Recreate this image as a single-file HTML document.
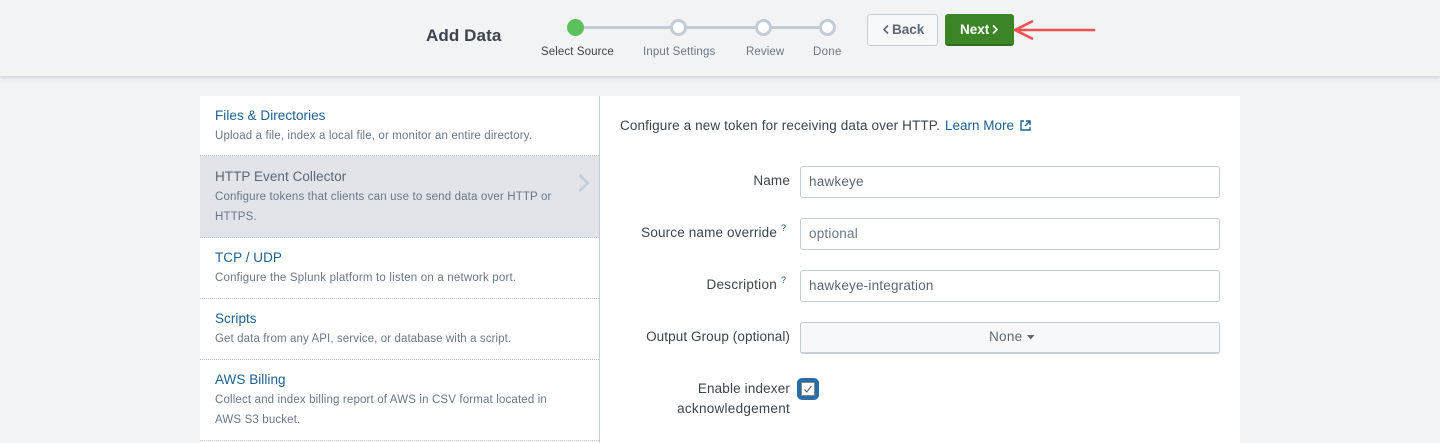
<!DOCTYPE html>
<html><head><meta charset="utf-8"><style>
html,body{margin:0;padding:0}
body{width:1440px;height:443px;background:#f2f3f5;position:relative;overflow:hidden;font-family:"Liberation Sans",sans-serif;font-size:13px;color:#3c444d}
.t{position:absolute;white-space:nowrap;line-height:20px}
.r{text-align:right}
.l{font-size:13.5px;letter-spacing:.15px}
.s{font-size:11.5px;letter-spacing:.15px;color:#6b7785}
.b{position:absolute;box-sizing:border-box}
.h{color:#1e6091;font-size:13.5px;letter-spacing:.05px}
.d{color:#6b7785;font-size:11.5px;letter-spacing:.15px}
.inp{position:absolute;left:800px;width:420px;height:32px;box-sizing:border-box;background:#fff;border:1px solid #c3cbd4;border-radius:3px;font-size:13.5px;letter-spacing:.2px;line-height:29px;padding-left:8px;color:#5c6773}
.dot{position:absolute;border-bottom:1px dotted #b5bdc6;left:200px;width:399px;height:0}
svg{position:absolute}
</style></head><body>
<div class="b" style="left:0;top:0;width:1440px;height:77px;background:#f2f3f5;border-bottom:1px solid #d5dae1;box-shadow:0 1px 3px rgba(170,180,195,.5)"></div>
<div class="t" style="left:426px;top:26px;font-size:17px;letter-spacing:.1px;font-weight:bold;color:#3c444d">Add Data</div>
<div class="b" style="left:575px;top:26px;width:252px;height:3px;background:#c3cbd4"></div>
<div class="b" style="left:567px;top:19px;width:17px;height:17px;border-radius:50%;background:#5cc05c"></div>
<div class="b" style="left:670px;top:19px;width:17px;height:17px;border-radius:50%;background:#fff;border:3px solid #c3cbd4"></div>
<div class="b" style="left:755px;top:19px;width:17px;height:17px;border-radius:50%;background:#fff;border:3px solid #c3cbd4"></div>
<div class="b" style="left:819px;top:19px;width:17px;height:17px;border-radius:50%;background:#fff;border:3px solid #c3cbd4"></div>
<div class="t s" style="left:541px;top:42px;color:#3c444d;letter-spacing:.1px">Select Source</div>
<div class="t s" style="left:643px;top:42px">Input Settings</div>
<div class="t s" style="left:746px;top:42px;letter-spacing:.1px">Review</div>
<div class="t s" style="left:813px;top:42px;letter-spacing:.3px">Done</div>

<div class="b" style="left:867px;top:14px;width:71px;height:32px;background:#f7f8fa;border:1px solid #c3cbd4;border-radius:3px"></div>
<svg style="left:882px;top:24px" width="8" height="12" viewBox="0 0 8 12"><path d="M6 1.500 2 5.500l4 4" fill="none" stroke="#5c6773" stroke-width="1.600"/></svg>
<div class="t" style="left:892px;top:20px;font-size:13.5px;font-weight:bold;color:#5c6773">Back</div>
<div class="b" style="left:945px;top:14px;width:69px;height:32px;background:#3c8527;border-bottom:2px solid #2f6f1e;border-radius:3px"></div>
<div class="t" style="left:960px;top:20px;font-size:13.5px;font-weight:bold;color:#fff">Next</div>
<svg style="left:991px;top:24px" width="8" height="12" viewBox="0 0 8 12"><path d="M2 1.500 6 5.500l-4 4" fill="none" stroke="#fff" stroke-width="1.600"/></svg>
<svg style="left:1012px;top:16px" width="86" height="28" viewBox="0 0 86 28"><path d="M82 14H3M20 5.500 3 14l17 8.500" fill="none" stroke="#f0504f" stroke-width="2.600" stroke-linecap="round" stroke-linejoin="round"/></svg>

<div class="b" style="left:200px;top:96px;width:1040px;height:347px;background:#fff"></div>
<div class="b" style="left:599px;top:96px;width:1px;height:347px;background:#c3cbd4"></div>
<div class="b" style="left:200px;top:156px;width:399px;height:82px;background:#e1e5e9"></div>
<div class="dot" style="top:155px"></div>
<div class="dot" style="top:237px"></div>
<div class="dot" style="top:298px"></div>
<div class="dot" style="top:359px"></div>
<div class="dot" style="top:440px"></div>

<div class="t h" style="left:215px;top:106px">Files &amp; Directories</div>
<div class="t d" style="left:215px;top:126px;letter-spacing:.14px">Upload a file, index a local file, or monitor an entire directory.</div>
<div class="t h" style="left:215px;top:167px;color:#5c6773">HTTP Event Collector</div>
<div class="t d" style="left:215px;top:187px">Configure tokens that clients can use to send data over HTTP or</div>
<div class="t d" style="left:215px;top:207px">HTTPS.</div>
<svg style="left:577px;top:173px" width="14" height="20" viewBox="0 0 14 20"><path d="M2.500 2 10.500 10l-8 8" fill="none" stroke="#c3cbd4" stroke-width="2.600"/></svg>
<div class="t h" style="left:215px;top:248px">TCP / UDP</div>
<div class="t d" style="left:215px;top:268px;letter-spacing:.19px">Configure the Splunk platform to listen on a network port.</div>
<div class="t h" style="left:215px;top:309px">Scripts</div>
<div class="t d" style="left:215px;top:329px;letter-spacing:.105px">Get data from any API, service, or database with a script.</div>
<div class="t h" style="left:215px;top:370px">AWS Billing</div>
<div class="t d" style="left:215px;top:390px">Collect and index billing report of AWS in CSV format located in</div>
<div class="t d" style="left:215px;top:410px">AWS S3 bucket.</div>

<div class="t l" style="left:620px;top:116px;letter-spacing:.13px">Configure a new token for receiving data over HTTP.</div>
<div class="t" style="left:945px;top:116px;font-size:13.5px;color:#1e6091">Learn More</div>
<svg style="left:1020px;top:120px" width="11" height="11" viewBox="0 0 11 11"><path d="M4 1H1v9h9V7M6 1h4v4M10 1 5 6" fill="none" stroke="#1e6091" stroke-width="1.400"/></svg>

<div class="t r l" style="right:650px;top:171px">Name</div>
<div class="inp" style="top:166px">hawkeye</div>
<div class="t r l" style="right:663px;top:223px">Source name override</div>
<div class="t" style="left:781px;top:218px;font-size:9px;color:#1e6091">?</div>
<div class="inp" style="top:218px;color:#6b7785">optional</div>
<div class="t r l" style="right:663px;top:275px;letter-spacing:.27px">Description</div>
<div class="t" style="left:781px;top:270px;font-size:9px;color:#1e6091">?</div>
<div class="inp" style="top:270px">hawkeye-integration</div>
<div class="t r l" style="right:650px;top:327px;letter-spacing:.09px">Output Group (optional)</div>
<div class="inp" style="top:322px;background:#f7f8fa;border-bottom:2px solid #c9d0d8"></div>
<div class="t" style="left:989px;top:327px;font-size:13.5px;letter-spacing:.3px;color:#5c6773">None</div>
<svg style="left:1027px;top:335px" width="8" height="5" viewBox="0 0 8 5"><path d="M0 0h7.500L3.750 4.500z" fill="#5c6773"/></svg>
<div class="t r l" style="right:650px;top:379px">Enable indexer</div>
<div class="t r l" style="right:650px;top:399px;letter-spacing:.27px">acknowledgement</div>
<div class="b" style="left:797px;top:378px;width:22px;height:22px;border:4px solid #2a6ca6;border-radius:5px;background:#fff"></div>
<div class="b" style="left:801px;top:382px;width:14px;height:14px;border:1px solid #7d8894;background:#fff"></div>
<svg style="left:801px;top:382px" width="14" height="14" viewBox="0 0 14 14"><path d="M3.500 7.500 5.800 10 10.500 4" fill="none" stroke="#5c6773" stroke-width="1.200"/></svg>
</body></html>
